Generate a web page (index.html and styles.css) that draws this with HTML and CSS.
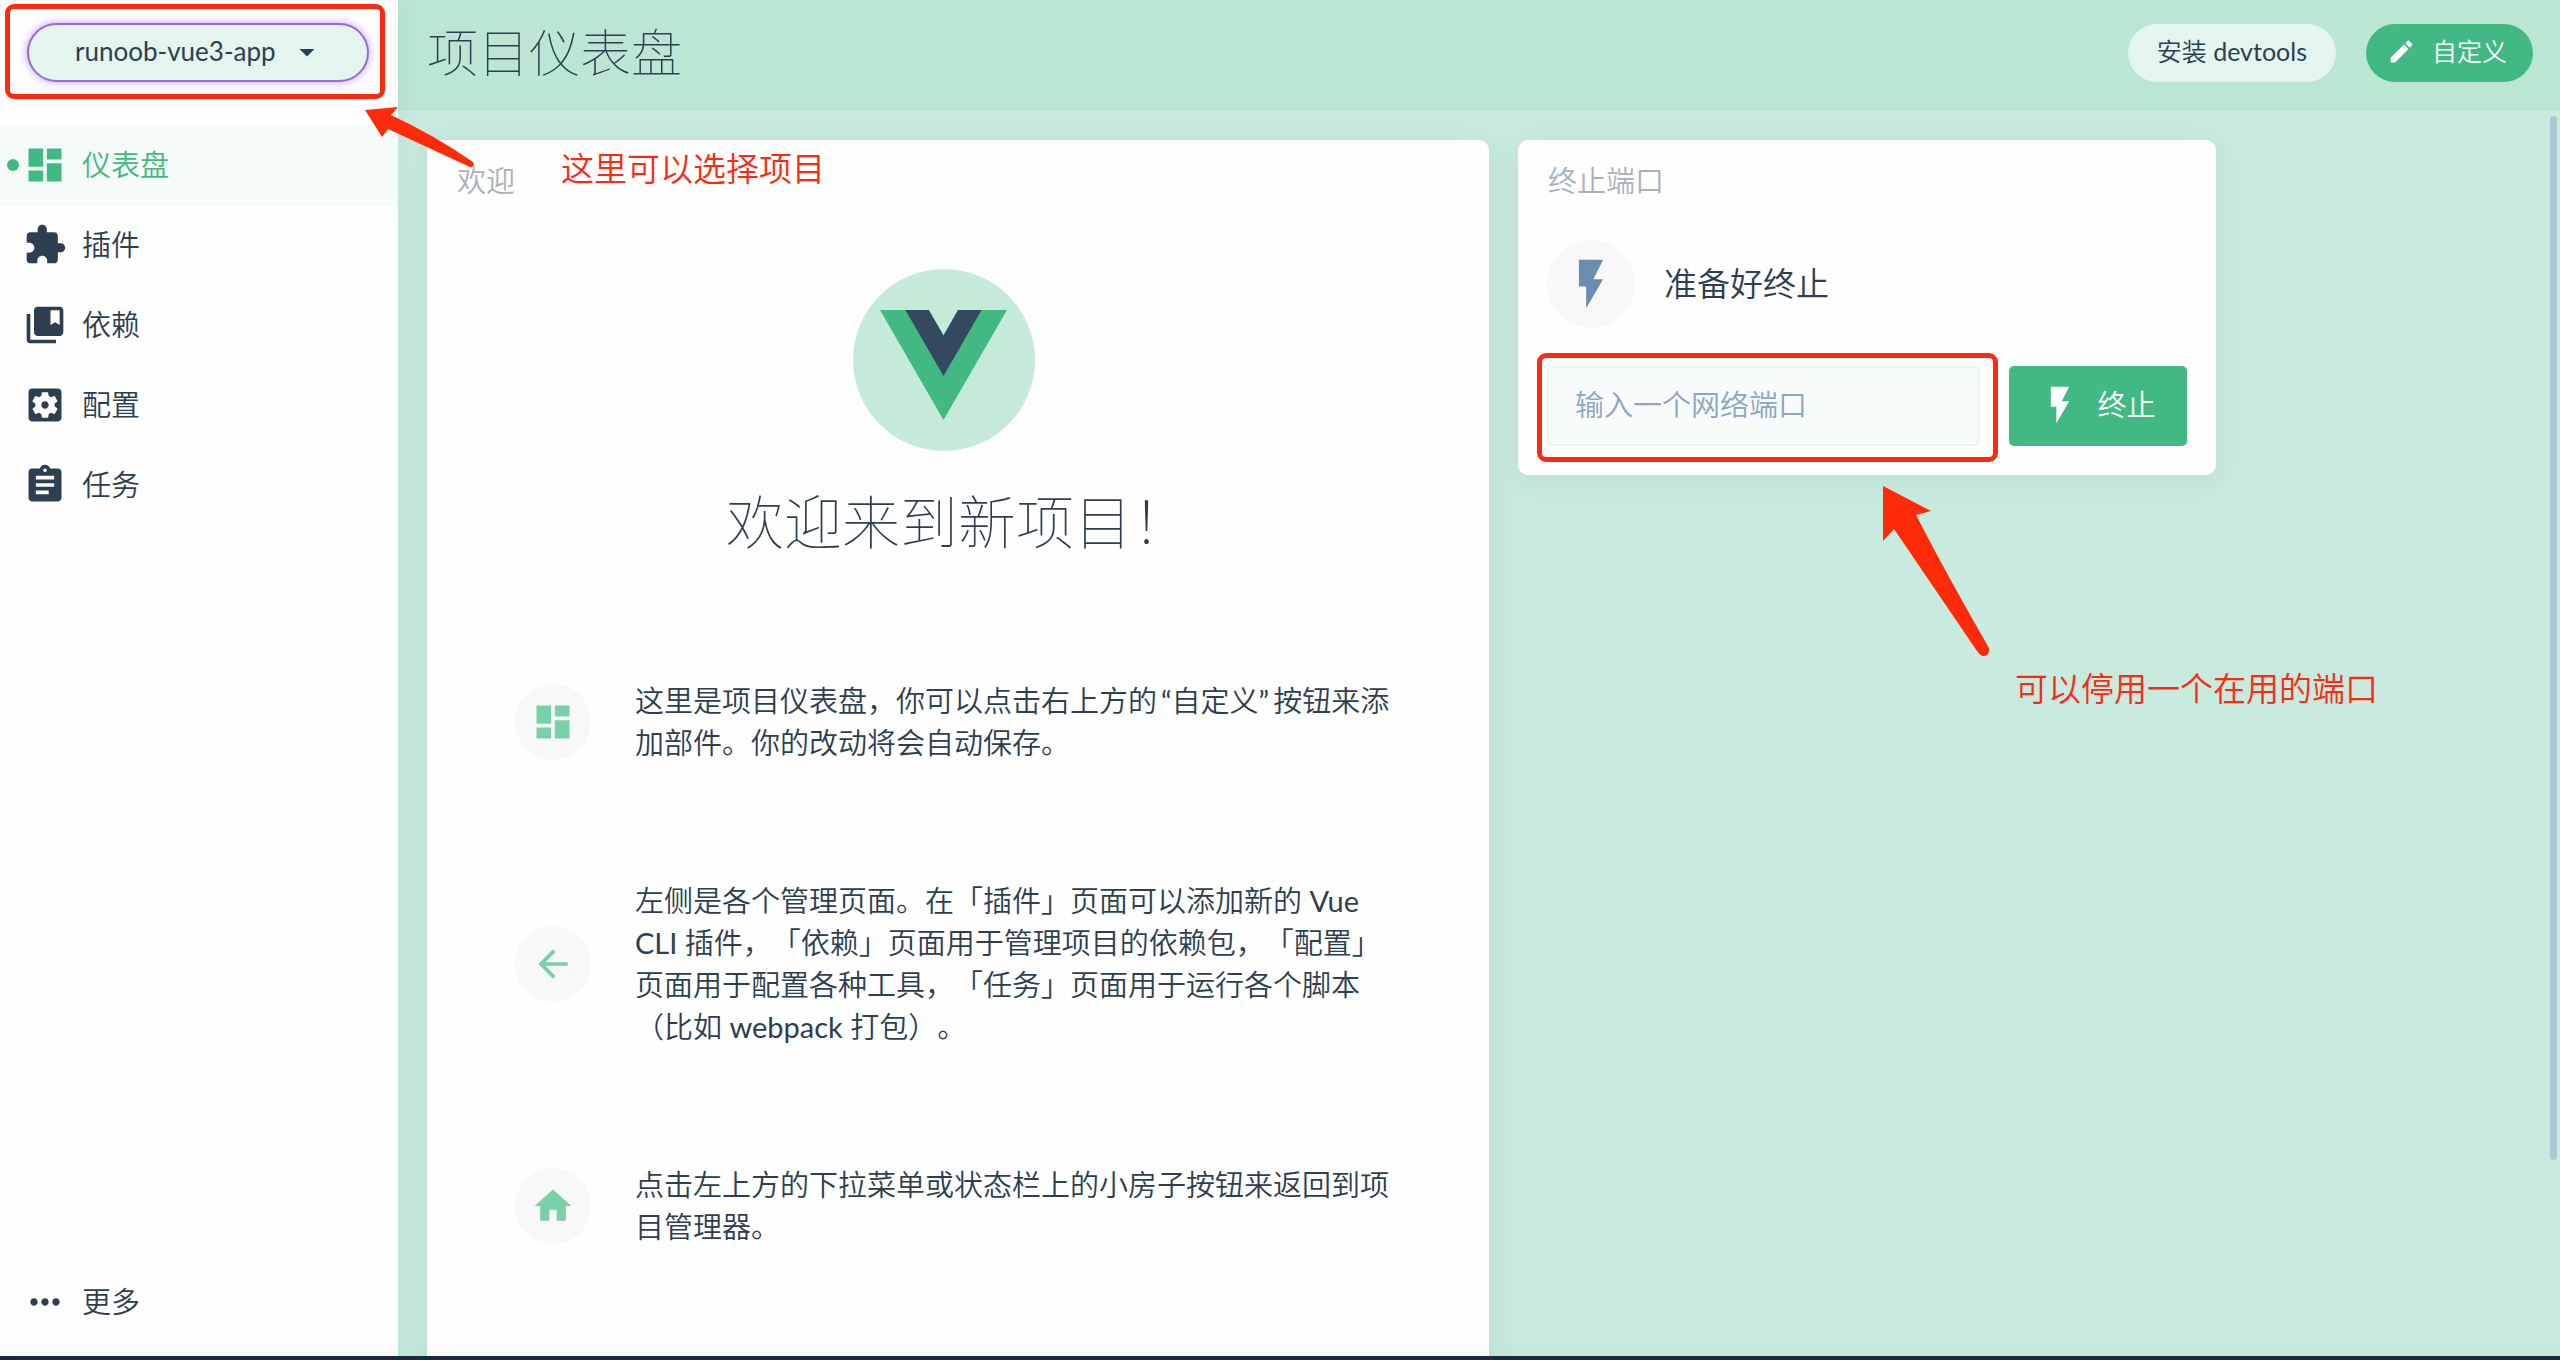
FILE: index.html
```html
<!DOCTYPE html>
<html lang="zh-CN">
<head>
<meta charset="utf-8">
<title>项目仪表盘</title>
<link rel="stylesheet" href="styles.css">
</head>
<body>
<div class="app">
  <aside class="sidebar">
    <div class="project">
      <div class="project-picker">
        <select class="project-select" aria-label="runoob-vue3-app">
          <option>runoob-vue3-app</option>
        </select>
        <svg class="project-caret" viewBox="0 0 24 24"><path d="M7 10l5 5 5-5z"/></svg>
      </div>
    </div>
    <nav class="menu">
      <a class="menu-item menu-item-active" href="#">
        <svg class="icon" viewBox="0 0 24 24"><path d="M3 13h8V3H3v10zm0 8h8v-6H3v6zm10 0h8V11h-8v10zm0-18v6h8V3h-8z"/></svg>
        <span>仪表盘</span>
      </a>
      <a class="menu-item" href="#">
        <svg class="icon" viewBox="0 0 24 24"><path d="M20.5 11H19V7c0-1.1-.9-2-2-2h-4V3.5C13 2.12 11.88 1 10.5 1S8 2.12 8 3.5V5H4c-1.1 0-1.99.9-1.99 2v3.8H3.5c1.49 0 2.7 1.21 2.7 2.7s-1.21 2.7-2.7 2.7H2V20c0 1.1.9 2 2 2h3.8v-1.5c0-1.49 1.21-2.7 2.7-2.7 1.49 0 2.7 1.21 2.7 2.7V22H17c1.1 0 2-.9 2-2v-4h1.5c1.38 0 2.5-1.12 2.5-2.5S21.88 11 20.5 11z"/></svg>
        <span>插件</span>
      </a>
      <a class="menu-item" href="#">
        <svg class="icon" viewBox="0 0 24 24"><path d="M4 6H2v14c0 1.1.9 2 2 2h14v-2H4V6z"/><path d="M20 2H8c-1.1 0-2 .9-2 2v12c0 1.1.9 2 2 2h12c1.1 0 2-.9 2-2V4c0-1.1-.9-2-2-2zm0 10l-2.5-1.5L15 12V4h5v8z"/></svg>
        <span>依赖</span>
      </a>
      <a class="menu-item" href="#">
        <svg class="icon" viewBox="0 0 24 24"><path d="M12 10c-1.1 0-2 .9-2 2s.9 2 2 2 2-.9 2-2-.9-2-2-2zm7-7H5c-1.11 0-2 .9-2 2v14c0 1.1.89 2 2 2h14c1.11 0 2-.9 2-2V5c0-1.1-.89-2-2-2zm-1.75 9c0 .23-.02.46-.05.68l1.48 1.16c.13.11.17.3.08.45l-1.4 2.42c-.09.15-.27.21-.43.15l-1.74-.7c-.36.28-.76.51-1.18.69l-.26 1.85c-.03.17-.18.3-.35.3h-2.8c-.17 0-.32-.13-.35-.29l-.26-1.85c-.43-.18-.82-.41-1.18-.69l-1.74.7c-.16.06-.34 0-.43-.15l-1.4-2.42c-.09-.15-.05-.34.08-.45l1.48-1.16c-.03-.23-.05-.46-.05-.69 0-.23.02-.46.05-.68l-1.48-1.16c-.13-.11-.17-.3-.08-.45l1.4-2.42c.09-.15.27-.21.43-.15l1.74.7c.36-.28.76-.51 1.18-.69l.26-1.85c.03-.17.18-.3.35-.3h2.8c.17 0 .32.13.35.29l.26 1.85c.43.18.82.41 1.18.69l1.74-.7c.16-.06.34 0 .43.15l1.4 2.42c.09.15.05.34-.08.45l-1.48 1.16c.03.23.05.46.05.69z"/></svg>
        <span>配置</span>
      </a>
      <a class="menu-item" href="#">
        <svg class="icon" viewBox="0 0 24 24"><path d="M19 3h-4.18C14.4 1.84 13.3 1 12 1c-1.3 0-2.4.84-2.82 2H5c-1.1 0-2 .9-2 2v14c0 1.1.9 2 2 2h14c1.1 0 2-.9 2-2V5c0-1.1-.9-2-2-2zm-7 0c.55 0 1 .45 1 1s-.45 1-1 1-1-.45-1-1 .45-1 1-1zm2 14H7v-2h7v2zm3-4H7v-2h10v2zm0-4H7V7h10v2z"/></svg>
        <span>任务</span>
      </a>
      <a class="menu-item menu-item-more" href="#">
        <svg class="icon" viewBox="0 0 24 24"><path d="M6 10c-1.1 0-2 .9-2 2s.9 2 2 2 2-.9 2-2-.9-2-2-2zm12 0c-1.1 0-2 .9-2 2s.9 2 2 2 2-.9 2-2-.9-2-2-2zm-6 0c-1.1 0-2 .9-2 2s.9 2 2 2 2-.9 2-2-.9-2-2-2z"/></svg>
        <span>更多</span>
      </a>
    </nav>
  </aside>

  <main class="view">
    <header class="view-header">
      <h1 class="view-title">项目仪表盘</h1>
      <button class="pill" type="button">安装 devtools</button>
      <button class="pill pill-primary" type="button">
        <svg class="icon-small" viewBox="0 0 24 24"><path d="M3 17.25V21h3.75L17.81 9.94l-3.75-3.75L3 17.25zM20.71 7.04c.39-.39.39-1.02 0-1.41l-2.34-2.34c-.39-.39-1.02-.39-1.41 0l-1.83 1.83 3.75 3.75 1.83-1.83z"/></svg>
        <span>自定义</span>
      </button>
    </header>

    <div class="dashboard">
      <section class="widget widget-welcome">
        <h2 class="widget-title">欢迎</h2>
        <div class="welcome">
          <div class="logo">
            <svg class="logo-mark" viewBox="0 0 262 227"><path fill="#42b883" d="M161 0l-30 52.400L100.700 0H0l131 227L262 0z"/><path fill="#35495e" d="M161 0l-30 52.400L100.700 0H52.300L131 136.200 209.600 0z"/></svg>
          </div>
          <p class="welcome-title">欢迎来到新项目！</p>
          <ul class="tips">
            <li class="tip">
              <span class="tip-icon"><svg class="icon" viewBox="0 0 24 24"><path d="M3 13h8V3H3v10zm0 8h8v-6H3v6zm10 0h8V11h-8v10zm0-18v6h8V3h-8z"/></svg></span>
              <p class="tip-text">这里是项目仪表盘，你可以点击右上方的<span class="quoted">“自定义”</span>按钮来添加部件。你的改动将会自动保存。</p>
            </li>
            <li class="tip">
              <span class="tip-icon"><svg class="icon" viewBox="0 0 24 24"><path d="M20 11H7.830l5.590-5.590L12 4l-8 8 8 8 1.410-1.410L7.830 13H20v-2z"/></svg></span>
              <p class="tip-text">左侧是各个管理页面。在「插件」页面可以添加新的 Vue CLI 插件，「依赖」页面用于管理项目的依赖包，「配置」页面用于配置各种工具，「任务」页面用于运行各个脚本（比如 webpack 打包）。</p>
            </li>
            <li class="tip">
              <span class="tip-icon"><svg class="icon" viewBox="0 0 24 24"><path d="M10 20v-6h4v6h5v-8h3L12 3 2 12h3v8z"/></svg></span>
              <p class="tip-text">点击左上方的下拉菜单或状态栏上的小房子按钮来返回到项目管理器。</p>
            </li>
          </ul>
        </div>
      </section>

      <section class="widget widget-port">
        <h2 class="widget-title">终止端口</h2>
        <div class="port-status">
          <span class="port-icon"><svg class="icon-large" viewBox="0 0 24 24"><path d="M7 2v11h3v9l7-12h-4l4-8z"/></svg></span>
          <span class="port-message">准备好终止</span>
        </div>
        <form class="port-form">
          <input class="port-input" type="text" placeholder="输入一个网络端口" aria-label="输入一个网络端口">
          <button class="port-button" type="button">
            <svg class="icon" viewBox="0 0 24 24"><path d="M7 2v11h3v9l7-12h-4l4-8z"/></svg>
            <span>终止</span>
          </button>
        </form>
      </section>
    </div>
    <div class="scroll-thumb"></div>
  </main>
</div>
<footer class="status-bar"></footer>

<div class="mark mark-project"></div>
<div class="mark mark-port"></div>
<svg class="arrow arrow-project" viewBox="0 0 112 62"><path d="M1 4L34 1 27 9Q70 29 109 56Q112 61 106 61L24 23 18 31z"/></svg>
<svg class="arrow arrow-port" viewBox="0 0 108 172"><path d="M1 1L49 26 34 30Q66 92 107 163Q108 170 102 171Q98 171 95 166L12 44 1 56z"/></svg>
<p class="note note-project">这里可以选择项目</p>
<p class="note note-port">可以停用一个在用的端口</p>
</body>
</html>
```
FILE: styles.css
```css
* {
  box-sizing: border-box;
}

body {
  position: relative;
  display: flex;
  flex-direction: column;
  height: 100vh;
  margin: 0;
  overflow: hidden;
  background: #c8eadf;
  color: #2c3e50;
  font-family: Lato, "Noto Sans CJK SC DemiLight", "Noto Sans CJK SC", sans-serif;
  font-size: 29px;
  font-weight: 400;
  line-height: 42px;
  text-spacing-trim: space-all;
}

h1, h2, p, ul {
  margin: 0;
  padding: 0;
  font-weight: 400;
}

button, input, select {
  margin: 0;
  border: 0;
  color: inherit;
  font: inherit;
}

svg {
  flex: none;
  fill: currentColor;
}

.icon {
  width: 44px;
  height: 44px;
}

.icon-small {
  width: 29px;
  height: 29px;
}

.icon-large {
  width: 58px;
  height: 58px;
}

.app {
  display: flex;
  flex: 1;
  min-height: 0;
}

/* Sidebar */

.sidebar {
  position: relative;
  z-index: 1;
  display: flex;
  flex: none;
  flex-direction: column;
  width: 398px;
  background: #fefefe;
  box-shadow: 0 0 20px rgba(44, 62, 80, 0.06);
}

.project {
  padding: 23px 29px 44px 27px;
}

.project-picker {
  position: relative;
}

.project-select {
  display: block;
  width: 100%;
  height: 59px;
  padding: 0 70px 4px 46px;
  border: 2px solid #9a69d2;
  border-radius: 30px;
  background: #e3f5ee;
  box-shadow: 0 0 8px rgba(140, 60, 240, 0.5);
  font-size: 26px;
  appearance: none;
}

.project-caret {
  position: absolute;
  top: 11px;
  right: 44px;
  width: 36px;
  height: 36px;
  pointer-events: none;
}

.menu {
  display: flex;
  flex: 1;
  flex-direction: column;
  padding-bottom: 13px;
}

.menu-item {
  position: relative;
  display: flex;
  align-items: center;
  gap: 15px;
  height: 80px;
  padding: 0 0 2px 23px;
  color: inherit;
  text-decoration: none;
}

.menu-item-active {
  background: #f5fbf8;
  color: #42b983;
}

.menu-item-active::before {
  position: absolute;
  left: 7px;
  width: 12px;
  height: 12px;
  border-radius: 50%;
  background: #42b983;
  content: "";
}

.menu-item-more {
  margin-top: auto;
}

/* Main view */

.view {
  position: relative;
  display: flex;
  flex: 1;
  flex-direction: column;
  min-width: 0;
}

.view-header {
  display: flex;
  flex: none;
  align-items: center;
  gap: 30px;
  height: 111px;
  padding: 0 27px 6px 29px;
  background: #bae6d3;
}

.view-title {
  flex: 1;
  font-family: Lato, "Noto Sans CJK SC", sans-serif;
  font-size: 51px;
  font-weight: 100;
  line-height: 60px;
}

.pill {
  display: flex;
  align-items: center;
  gap: 16px;
  height: 58px;
  padding: 0 29px 3px;
  border-radius: 29px;
  background: #e3f5ee;
  font-size: 25px;
}

.pill-primary {
  padding: 0 26px 3px 21px;
  background: #42b983;
  color: #fff;
}

.dashboard {
  display: grid;
  flex: 1;
  grid-template-columns: minmax(0, 1062fr) minmax(0, 698fr) minmax(0, 288fr);
  gap: 29px;
  min-height: 0;
  padding: 29px 27px 0 29px;
  overflow: hidden;
}

.widget {
  border-radius: 10px;
  background: #fefefe;
  box-shadow: 0 5px 30px rgba(44, 62, 80, 0.08);
}

.widget-title {
  padding: 20px 30px 0;
  color: #a8b2ba;
  font-size: 29px;
}

.widget-welcome {
  border-radius: 10px 10px 0 0;
}

.welcome {
  display: flex;
  flex-direction: column;
  align-items: center;
  padding: 67px 88px 0;
}

.logo {
  display: flex;
  align-items: center;
  justify-content: center;
  width: 182px;
  height: 182px;
  margin-right: 29px;
  border-radius: 50%;
  background: #c6eada;
}

.logo-mark {
  width: 127px;
  height: 110px;
  margin-top: 10px;
}

.welcome-title {
  padding: 29px 0 116px;
  font-family: Lato, "Noto Sans CJK SC", sans-serif;
  font-size: 58px;
  font-weight: 100;
  line-height: 84px;
}

.tips {
  display: flex;
  flex-direction: column;
  gap: 116px;
  width: 100%;
  list-style: none;
}

.tip {
  display: flex;
  align-items: center;
  gap: 44px;
}

.tip-icon {
  display: flex;
  flex: none;
  align-items: center;
  justify-content: center;
  width: 76px;
  height: 76px;
  border-radius: 50%;
  background: #f8f8f8;
  color: #78cfa8;
}

.tip-text {
  flex: 1;
}

.quoted {
  padding: 0 4px;
}

.widget-port {
  align-self: start;
  padding-bottom: 29px;
}

.port-status {
  display: flex;
  align-items: center;
  gap: 29px;
  padding: 38px 29px;
}

.port-icon {
  display: flex;
  align-items: center;
  justify-content: center;
  width: 88px;
  height: 88px;
  border-radius: 50%;
  background: #f8f8f8;
  color: #6b8eb0;
}

.port-message {
  padding-bottom: 2px;
  font-size: 33px;
}

.port-form {
  display: flex;
  gap: 29px;
  padding: 0 29px;
}

.port-input {
  flex: 1;
  min-width: 0;
  height: 80px;
  padding: 0 26px 3px;
  border: 2px solid #e8f6f0;
  border-radius: 5px;
  background: #f7fbfa;
}

.port-input::placeholder {
  color: #8ba6c4;
  opacity: 1;
}

.port-button {
  display: flex;
  align-items: center;
  justify-content: center;
  gap: 15px;
  width: 178px;
  height: 80px;
  padding: 0 2px 2px 0;
  border-radius: 5px;
  background: #42b983;
  color: #fff;
}

.scroll-thumb {
  position: absolute;
  top: 116px;
  right: 3px;
  width: 7px;
  height: 77%;
  border-radius: 4px;
  background: #b0c6d0;
}

.status-bar {
  position: relative;
  z-index: 2;
  flex: none;
  height: 4px;
  background: #1d2b38;
  box-shadow: 0 0 20px rgba(0, 0, 0, 0.12);
}

/* Annotations drawn over the page */

.mark {
  position: absolute;
  z-index: 3;
  border: 5px solid #fc2a10;
  border-radius: 9px;
  pointer-events: none;
}

.mark-project {
  top: 4px;
  left: 5px;
  width: 380px;
  height: 95px;
}

.mark-port {
  top: 353px;
  left: 1537px;
  width: 461px;
  height: 109px;
}

.arrow {
  position: absolute;
  z-index: 3;
  color: #ff2a0a;
}

.arrow-project {
  top: 106px;
  left: 364px;
  width: 112px;
  height: 62px;
}

.arrow-port {
  top: 485px;
  left: 1882px;
  width: 108px;
  height: 172px;
}

.note {
  position: absolute;
  z-index: 3;
  color: #fc2a10;
  font-size: 33px;
}

.note-project {
  top: 147px;
  left: 561px;
}

.note-port {
  top: 667px;
  left: 2015px;
}
```
